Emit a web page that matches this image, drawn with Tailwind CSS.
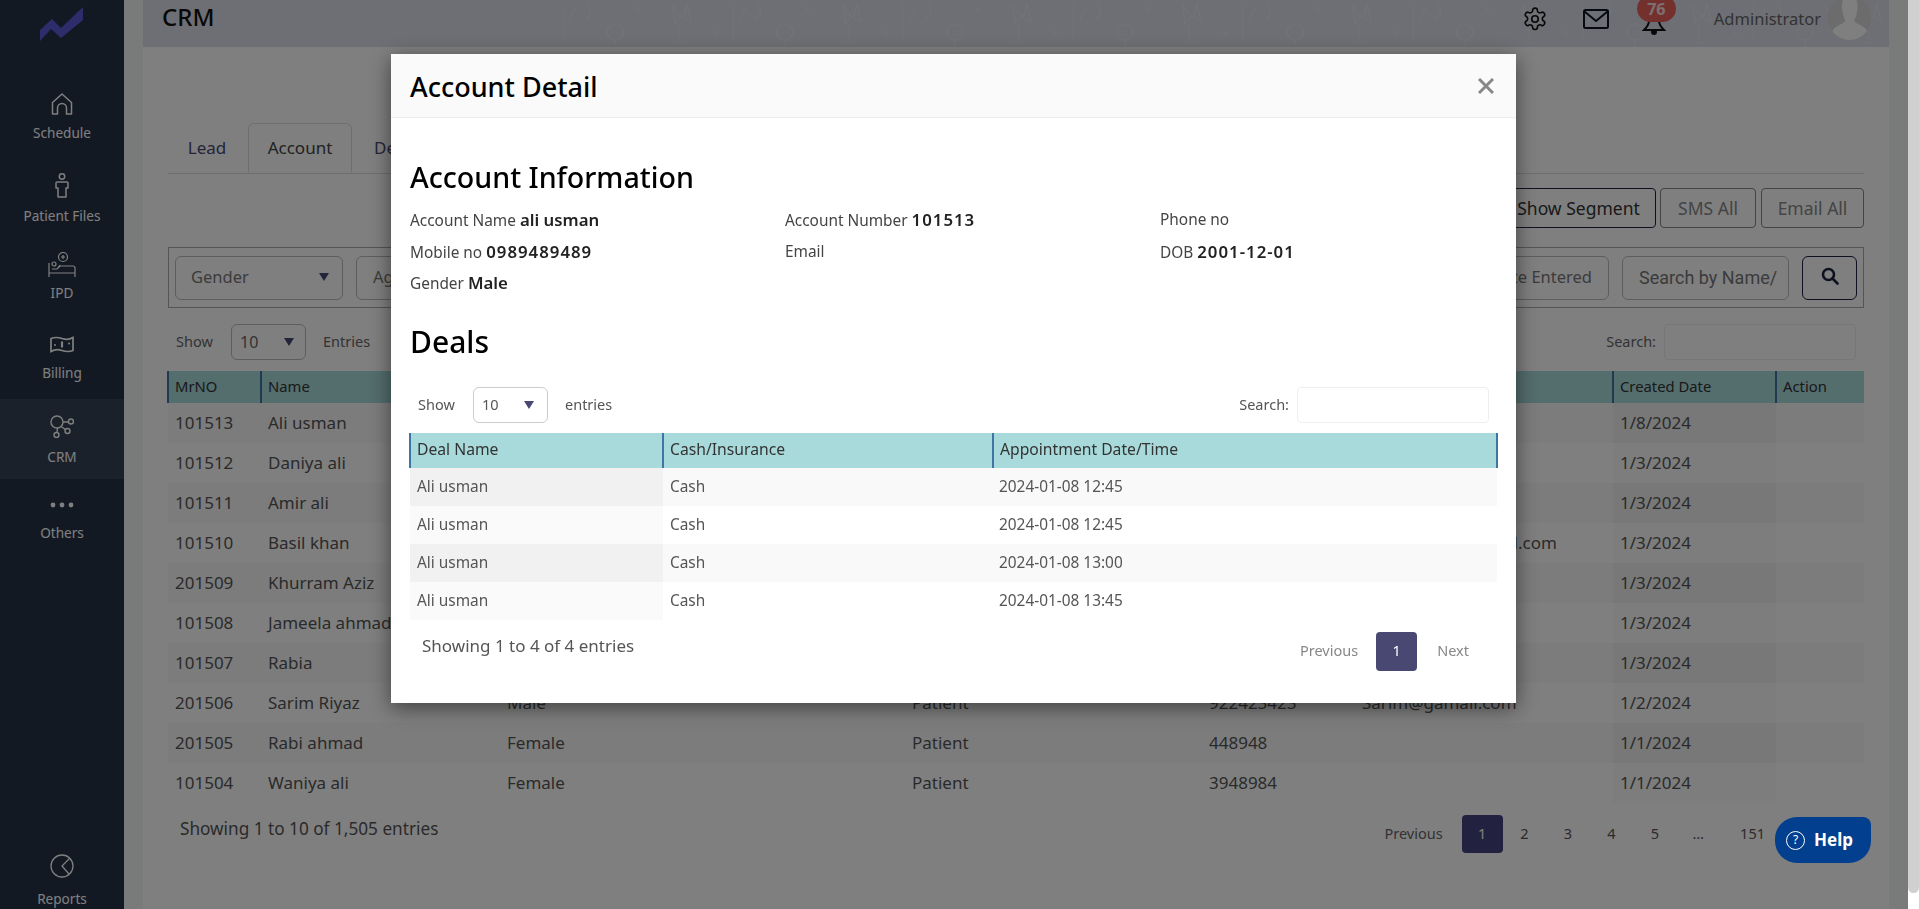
<!DOCTYPE html>
<html lang="en">
<head>
  <meta charset="UTF-8">
  <title>CRM - Account Detail</title>
  <script src="https://cdn.jsdelivr.net/npm/@tailwindcss/browser@4"></script>
</head>
<body class="h-[909px] overflow-hidden bg-white font-['Noto_Sans',sans-serif] text-[#555]">

<div class="flex h-[909px] w-[1908px] overflow-hidden">
  <!-- Sidebar -->
  <aside class="flex h-full w-[124px] shrink-0 flex-col bg-[#263246] text-[13.6px] leading-[18px] text-white">
    <div class="h-[79px] shrink-0">
      <svg width="124" height="79" viewBox="0 0 124 79"><polygon points="40,41 40,30 52,19 61,28 83,7 83,20 61,38 51,29" fill="#5a5ad6"/></svg>
    </div>
    <a class="flex h-20 shrink-0 flex-col items-center pt-[14px]">
      <svg class="mb-[9px]" width="22" height="22" viewBox="0 0 22 22" fill="none" stroke="currentColor" stroke-width="1.5" stroke-linejoin="round"><path d="M1.500 21V9.500L11 1l9.500 8.500V21h-5v-6a4.500 4.500 0 0 0-9 0v6z"/></svg>
      <span>Schedule</span>
    </a>
    <a class="flex h-20 shrink-0 flex-col items-center pt-[14px]">
      <svg class="mb-[9px]" width="14" height="25" viewBox="0 0 14 25" fill="none" stroke="currentColor" stroke-width="1.5"><circle cx="7" cy="3.500" r="2.700"/><path d="M2 9h10q1 0 1 1v5h-2v9H3v-9H1v-5q0-1 1-1z" stroke-linejoin="round"/></svg>
      <span>Patient Files</span>
    </a>
    <a class="flex h-20 shrink-0 flex-col items-center pt-[13px]">
      <svg class="mb-[6px]" width="28" height="26" viewBox="0 0 28 26" fill="none" stroke="currentColor" stroke-width="1.200"><circle cx="15" cy="5" r="4.500"/><path d="M13 5h4M15 3v4M1 11v14M1 21h26M27 25V16q0-2-2-2H12l-3 3H4"/><circle cx="6" cy="12" r="2"/><path d="M10 16l2-3"/></svg>
      <span>IPD</span>
    </a>
    <a class="flex h-20 shrink-0 flex-col items-center pt-[17px]">
      <svg class="mb-[11px]" width="24" height="17" viewBox="0 0 24 17" fill="none" stroke="currentColor" stroke-width="1.700"><path d="M1 2.500q5-2 11 0t11-1v13q-5 2-11 0t-11 1z"/><path d="M12 5.500v6" stroke-width="2.200"/><circle cx="5" cy="9" r="1" fill="currentColor" stroke="none"/><circle cx="19" cy="7.500" r="1" fill="currentColor" stroke="none"/></svg>
      <span>Billing</span>
    </a>
    <a class="flex h-20 shrink-0 flex-col items-center bg-[#364256] pt-[16px]">
      <svg class="mb-[10px]" width="24" height="23" viewBox="0 0 24 23" fill="none" stroke="currentColor" stroke-width="1.400"><circle cx="7" cy="7" r="6"/><circle cx="21" cy="6.500" r="2.500"/><circle cx="6.500" cy="20" r="2.500"/><circle cx="17.500" cy="16" r="2.500"/><path d="M13 7h5.500M7.500 13l-.5 4.500M11 11.500l4.500 3"/></svg>
      <span>CRM</span>
    </a>
    <a class="flex h-20 shrink-0 flex-col items-center pt-[23px]">
      <svg class="mb-[16px]" width="24" height="6" viewBox="0 0 24 6" fill="currentColor"><circle cx="3" cy="3" r="2.400"/><circle cx="12" cy="3" r="2.400"/><circle cx="21" cy="3" r="2.400"/></svg>
      <span>Others</span>
    </a>
    <a class="mt-auto flex shrink-0 flex-col items-center pb-[1px]">
      <svg class="mb-[12px]" width="24" height="24" viewBox="0 0 24 24" fill="none" stroke="currentColor" stroke-width="1.300"><circle cx="12" cy="12" r="11"/><path d="M20 4l-8 8 7 8"/></svg>
      <span>Reports</span>
    </a>
  </aside>

  <!-- Main -->
  <main class="min-w-0 flex-1 bg-[#f3f4f4] px-[19px]">
    <header class="relative flex h-[47px] items-start overflow-hidden bg-[#dcdfe8] pl-[19px] text-[#333]">
      <svg class="absolute inset-0" width="1746" height="47">
        <defs>
          <pattern id="confetti" width="170" height="47" patternUnits="userSpaceOnUse">
            <g fill="none" stroke="#ffffff" stroke-opacity=".22" stroke-width="1.200">
              <path d="M20 6l8 10-6 8zM34 4l-4 14 8 4z"/><path d="M26 24v16M20 42h12"/>
              <path d="M80 4v36M92 8l-6 14M104 2q8 10-2 18"/>
              <circle cx="132" cy="32" r="8"/><path d="M132 40q-2 4 2 7"/>
              <path d="M152 6l4 6M60 30l4 6"/>
            </g>
          </pattern>
        </defs>
        <rect x="420" width="1326" height="47" fill="url(#confetti)"/>
      </svg>
      <h1 class="relative mt-[5px] text-[24px] font-medium leading-[24px] text-[#111]">CRM</h1>
      <div class="relative ml-auto flex h-[47px] items-start">
        <svg class="mr-[35px] mt-[6px]" width="26" height="26" viewBox="0 0 24 24" fill="none" stroke="#111" stroke-width="1.500" stroke-linecap="round" stroke-linejoin="round"><path d="M12.200 2h-.4a2 2 0 0 0-2 2v.2a2 2 0 0 1-1 1.700l-.4.200a2 2 0 0 1-2 0l-.2-.1a2 2 0 0 0-2.700.700l-.2.400a2 2 0 0 0 .7 2.700l.2.100a2 2 0 0 1 1 1.700v.5a2 2 0 0 1-1 1.700l-.2.100a2 2 0 0 0-.7 2.700l.2.400a2 2 0 0 0 2.700.7l.2-.1a2 2 0 0 1 2 0l.4.200a2 2 0 0 1 1 1.700v.2a2 2 0 0 0 2 2h.4a2 2 0 0 0 2-2v-.2a2 2 0 0 1 1-1.700l.4-.2a2 2 0 0 1 2 0l.2.100a2 2 0 0 0 2.700-.7l.2-.4a2 2 0 0 0-.7-2.700l-.2-.1a2 2 0 0 1-1-1.700v-.5a2 2 0 0 1 1-1.700l.2-.1a2 2 0 0 0 .7-2.700l-.2-.4a2 2 0 0 0-2.700-.7l-.2.100a2 2 0 0 1-2 0l-.4-.2a2 2 0 0 1-1-1.700V4a2 2 0 0 0-2-2z"/><circle cx="12" cy="12" r="3"/></svg>
        <svg class="mr-[33px] mt-[9px]" width="26" height="20" viewBox="0 0 26 20" fill="none" stroke="#0d1420" stroke-width="2" stroke-linejoin="round"><rect x="1" y="1" width="24" height="18" rx="1.500"/><path d="M1.500 2.500L13 12 24.500 2.500"/></svg>
        <div class="relative mr-[48px] h-[47px] w-[24px]">
          <svg class="absolute left-0 top-[15px]" width="24" height="20" viewBox="0 0 24 20" fill="none" stroke="#111" stroke-width="2"><path d="M7 2v4q0 4-5 9h20q-5-5-5-9V2"/><circle cx="12" cy="17" r="2" fill="#111"/></svg>
          <span class="absolute left-[-5px] top-[-5px] flex h-[27px] w-[39px] items-center justify-center rounded-full bg-[#e8605a] text-[16px] font-bold text-white/80">76</span>
        </div>
        <span class="mt-[7px] text-[16.500px] leading-[24px] text-[#666]">Administrator</span>
        <div class="relative ml-[7px] mr-[18px] mt-[-5px] h-[45px] w-[43px] overflow-hidden rounded-full bg-[#d8d8d8]">
          <svg class="absolute inset-0" width="43" height="45" viewBox="0 0 43 45" fill="#fff"><path d="M21.500 0c6 0 8 5 8 12s-3 12-3 14 10 5 12 9 1 10 1 10H4s-1-6 1-10 12-7 12-9-3-7-3-14 2-12 7.500-12z"/></svg>
        </div>
      </div>
    </header>

    <section class="h-[862px] bg-white px-[25px] pt-[76px]">
      <!-- Tabs -->
      <div class="flex h-[51px] border-b border-[#ddd] text-[17px]">
        <a class="flex w-[80px] items-center justify-center pr-[2px] text-[#484872]">Lead</a>
        <a class="flex w-[104px] items-center justify-center rounded-t-md border border-b-white border-[#ddd] bg-white text-[#444]">Account</a>
        <a class="flex items-center pl-[22px] text-[#484872]">Deals</a>
      </div>

      <!-- Buttons -->
      <div class="mt-[14px] flex h-[40px] justify-end gap-[5px] text-[17.500px]">
        <button class="h-full w-[170px] rounded border border-[#1d2540] pl-[15px] text-[#333]">Show Segment</button>
        <button class="ml-[-1px] h-full w-[96px] rounded border border-[#888] text-[#888]">SMS All</button>
        <button class="h-full w-[103px] rounded border border-[#888] text-[#888]">Email All</button>
      </div>

      <!-- Filters -->
      <div class="mt-[19px] flex h-[61px] items-center border border-[#aaa] px-[6px] text-[16.500px] text-[#777]">
        <div class="flex h-[44px] w-[168px] items-center justify-between rounded-md border border-[#bbb] pb-[1px] pl-[15px] pr-[12px]">
          Gender
          <svg width="12" height="8" viewBox="0 0 12 8"><polygon points="1,0 11,0 6,8" fill="#484872"/></svg>
        </div>
        <div class="ml-[13px] flex h-[44px] w-[168px] items-center rounded-md border border-[#bbb] pl-[16px]">Age</div>
        <div class="ml-auto flex h-[44px] w-[170px] items-center justify-end rounded-md border border-[#bbb] pr-[16px]">Date Entered</div>
        <div class="ml-[13px] flex h-[44px] w-[167px] items-center overflow-hidden whitespace-nowrap rounded-md border border-[#bbb] pl-[16px] font-['Roboto',sans-serif] text-[18px]">Search by Name/</div>
        <button class="ml-[13px] flex h-[44px] w-[55px] items-center justify-center rounded-md border border-[#1d2540]">
          <svg class="mb-[3px]" width="18" height="18" viewBox="0 0 18 18" fill="none" stroke="#1d2540" stroke-width="2.600"><circle cx="7.500" cy="7.500" r="5.500"/><path d="M11.500 11.500L16.500 16.500" stroke-linecap="round"/></svg>
        </button>
      </div>

      <!-- Length / search -->
      <div class="mt-[16px] flex h-[36px] items-center text-[14.500px] text-[#666]">
        <span class="ml-[8px] w-[55px]">Show</span>
        <div class="flex h-[36px] w-[75px] items-center justify-between rounded-md border border-[#bbb] pl-[8px] pr-[10px] text-[16px]">
          10
          <svg width="12" height="8" viewBox="0 0 12 8"><polygon points="1,0 11,0 6,8" fill="#484872"/></svg>
        </div>
        <span class="ml-[17px]">Entries</span>
        <span class="ml-auto mr-[8px]">Search:</span>
        <div class="mr-[8px] h-[36px] w-[192px] rounded border border-[#eee]"></div>
      </div>

      <!-- Accounts table -->
      <table class="ml-[-1px] mt-[11px] w-[1696px] table-fixed border-collapse text-[17px]">
        <colgroup>
          <col class="w-[93px]"><col class="w-[239px]"><col class="w-[405px]"><col class="w-[297px]"><col class="w-[153px]"><col class="w-[258px]"><col class="w-[163px]"><col class="w-[88px]">
        </colgroup>
        <thead>
          <tr class="h-[32px] bg-[#a8dadb] text-left text-[14.800px] text-[#333]">
            <th class="border-l-2 border-[#3f75a3] px-[6px] pb-[2px] font-normal">MrNO</th>
            <th class="border-l-2 border-[#3f75a3] px-[6px] pb-[2px] font-normal">Name</th>
            <th class="border-l-2 border-[#3f75a3] px-[6px] pb-[2px] font-normal">Gender</th>
            <th class="border-l-2 border-[#3f75a3] px-[6px] pb-[2px] font-normal">Type</th>
            <th class="border-l-2 border-[#3f75a3] px-[6px] pb-[2px] font-normal">Phone</th>
            <th class="border-l-2 border-[#3f75a3] px-[6px] pb-[2px] font-normal">Email</th>
            <th class="border-l-2 border-[#3f75a3] px-[6px] pb-[2px] font-normal">Created Date</th>
            <th class="border-l-2 border-[#3f75a3] px-[6px] pb-[2px] font-normal">Action</th>
          </tr>
        </thead>
        <tbody id="accounts"></tbody>
      </table>

      <div class="mt-[12px] flex items-start">
        <span class="ml-[12px] mt-[1px] text-[17.200px]">Showing 1 to 10 of 1,505 entries</span>
        <div class="ml-auto mr-[99px] flex items-center text-[14.500px] text-[#555]">
          <span class="mr-[19px] text-[#666]">Previous</span>
          <span class="flex h-[38px] w-[41px] items-center justify-center rounded-sm bg-[#444480] text-white">1</span>
          <span class="w-[43.500px] text-center">2</span>
          <span class="w-[43.500px] text-center">3</span>
          <span class="w-[43.500px] text-center">4</span>
          <span class="w-[43.500px] text-center">5</span>
          <span class="w-[43.500px] text-center">…</span>
          <span class="ml-[20px]">151</span>
        </div>
      </div>
    </section>
  </main>
</div>

<!-- Scrollbar -->
<div class="fixed right-0 top-0 h-[909px] w-[11px] bg-white">
  <div class="h-[893px] rounded-b-md bg-[#d0d0d0]"></div>
</div>

<!-- Backdrop -->
<div class="fixed left-0 top-0 h-[909px] w-[1908px] bg-black/50"></div>

<!-- Help button -->
<button class="fixed left-[1775px] top-[817px] flex h-[46px] w-[96px] items-center gap-[9px] rounded-[22px_8px_22px_22px] bg-[#023f8e] pl-[11px] text-[17px] font-bold text-white">
  <span class="flex h-[19px] w-[19px] items-center justify-center rounded-full border-[1.500px] border-white text-[12px] font-normal">?</span>
  Help
</button>

<!-- Modal -->
<div class="fixed left-[391px] top-[54px] h-[649px] w-[1125px] bg-white text-[15.400px] shadow-[0_5px_20px_rgba(0,0,0,0.5)]">
  <div class="flex h-[64px] items-center justify-between border-b border-[#eee] bg-[#fafafa] pl-[19px] pr-[22px]">
    <h2 class="pt-[3px] text-[27px] font-medium text-black">Account Detail</h2>
    <svg width="16" height="16" viewBox="0 0 16 16" stroke="#888" stroke-width="3"><path d="M1 1l14 14M15 1L1 15"/></svg>
  </div>
  <div class="px-[19px]">
    <h3 class="mt-[42px] text-[28.600px] font-medium leading-[34px] text-black">Account Information</h3>
    <div class="mt-[10px] grid auto-rows-[31.500px] grid-cols-[375px_375px_1fr] items-center text-[#444]">
      <p>Account Name <b class="text-[16.800px] font-semibold text-[#222]">ali usman</b></p>
      <p>Account Number <b class="text-[16.800px] font-semibold tracking-[1px] text-[#222]">101513</b></p>
      <p>Phone no</p>
      <p>Mobile no <b class="text-[16.800px] font-semibold tracking-[1px] text-[#222]">0989489489</b></p>
      <p>Email</p>
      <p>DOB <b class="text-[16.800px] font-semibold tracking-[1px] text-[#222]">2001-12-01</b></p>
      <p>Gender <b class="text-[16.800px] font-semibold text-[#222]">Male</b></p>
    </div>
    <h3 class="mt-[26px] text-[30px] font-medium leading-[34px] text-black">Deals</h3>

    <div class="mt-[28px] flex h-[36px] items-center text-[14.500px] text-[#555]">
      <span class="ml-[8px] w-[55px]">Show</span>
      <div class="flex h-[36px] w-[75px] items-center justify-between rounded-md border border-[#ccc] pl-[8px] pr-[12px]">
        10
        <svg width="12" height="8" viewBox="0 0 12 8"><polygon points="1,0 11,0 6,8" fill="#484872"/></svg>
      </div>
      <span class="ml-[17px]">entries</span>
      <span class="ml-auto mr-[8px]">Search:</span>
      <div class="mr-[8px] h-[36px] w-[192px] rounded border border-[#eee]"></div>
    </div>

    <table class="ml-[-1px] mt-[10px] w-[1087px] table-fixed border-collapse">
      <colgroup><col class="w-[253px]"><col class="w-[330px]"><col class="w-[504px]"></colgroup>
      <thead>
        <tr class="h-[35px] bg-[#a8dadb] text-left text-[15.700px] text-[#333]">
          <th class="border-l-2 border-[#3f75a3] px-[6px] pb-[1px] font-normal">Deal Name</th>
          <th class="border-l-2 border-[#3f75a3] px-[6px] pb-[1px] font-normal">Cash/Insurance</th>
          <th class="border-x-2 border-[#3f75a3] px-[6px] pb-[1px] font-normal">Appointment Date/Time</th>
        </tr>
      </thead>
      <tbody>
        <tr class="h-[38px] bg-[#f9f9f9]"><td class="bg-[#f1f1f1] px-[7px] pt-[1px]">Ali usman</td><td class="px-[7px] pt-[1px]">Cash</td><td class="px-[6px] pt-[1px]">2024-01-08 12:45</td></tr>
        <tr class="h-[38px] bg-white"><td class="bg-[#fafafa] px-[7px] pt-[1px]">Ali usman</td><td class="px-[7px] pt-[1px]">Cash</td><td class="px-[6px] pt-[1px]">2024-01-08 12:45</td></tr>
        <tr class="h-[38px] bg-[#f9f9f9]"><td class="bg-[#f1f1f1] px-[7px] pt-[1px]">Ali usman</td><td class="px-[7px] pt-[1px]">Cash</td><td class="px-[6px] pt-[1px]">2024-01-08 13:00</td></tr>
        <tr class="h-[38px] bg-white"><td class="bg-[#fafafa] px-[7px] pt-[1px]">Ali usman</td><td class="px-[7px] pt-[1px]">Cash</td><td class="px-[6px] pt-[1px]">2024-01-08 13:45</td></tr>
      </tbody>
    </table>

    <div class="mt-[12px] flex items-start">
      <span class="ml-[12px] mt-[1px] text-[17px]">Showing 1 to 4 of 4 entries</span>
      <div class="ml-auto mr-[28px] flex items-center text-[14.500px] text-[#888]">
        <span class="mr-[18px]">Previous</span>
        <span class="flex h-[39px] w-[41px] items-center justify-center rounded-sm bg-[#484872] text-white">1</span>
        <span class="ml-[20px]">Next</span>
      </div>
    </div>
  </div>
</div>

<script>
  // Rows of the accounts table behind the modal
  const accounts = [
    ['101513', 'Ali usman', 'Male', 'Patient', '0989489489', '', '1/8/2024'],
    ['101512', 'Daniya ali', 'Female', 'Patient', '8948948', '', '1/3/2024'],
    ['101511', 'Amir ali', 'Male', 'Patient', '4894894', '', '1/3/2024'],
    ['101510', 'Basil khan', 'Male', 'Patient', '9224234', 'basilkhan12@gmail.com', '1/3/2024'],
    ['201509', 'Khurram Aziz', 'Male', 'Patient', '8948949', '', '1/3/2024'],
    ['101508', 'Jameela ahmad', 'Female', 'Patient', '4894894', '', '1/3/2024'],
    ['101507', 'Rabia', 'Female', 'Patient', '8948948', '', '1/3/2024'],
    ['201506', 'Sarim Riyaz', 'Male', 'Patient', '922423423', 'Sarim@gamail.com', '1/2/2024'],
    ['201505', 'Rabi ahmad', 'Female', 'Patient', '448948', '', '1/1/2024'],
    ['101504', 'Waniya ali', 'Female', 'Patient', '3948984', '', '1/1/2024'],
  ];

  document.getElementById('accounts').innerHTML = accounts.map((row, i) => `
    <tr class="h-[40px] ${i % 2 === 0 ? 'bg-[#f9f9f9]' : 'bg-white'}">
      ${row.map((cell, c) => `<td class="whitespace-nowrap px-[7px] ${c === 6 ? (i % 2 === 0 ? 'bg-[#f1f1f1]' : 'bg-[#fafafa]') : ''}">${cell}</td>`).join('')}
      <td></td>
    </tr>`).join('');
</script>
</body>
</html>
